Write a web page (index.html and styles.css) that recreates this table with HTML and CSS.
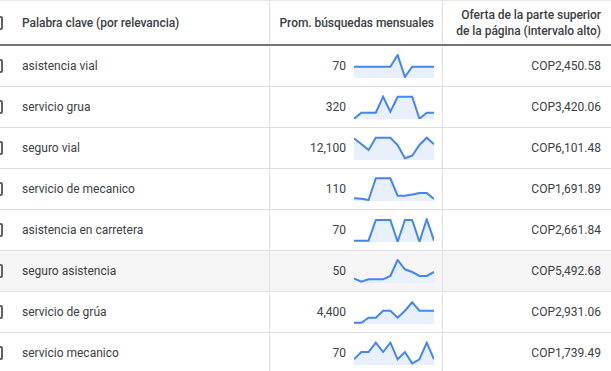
FILE: index.html
```html
<!DOCTYPE html>
<html lang="es">
<head>
<meta charset="utf-8">
<link rel="stylesheet" href="styles.css">
</head>
<body>
<div class="table">
  <div class="row head">
    <div class="cell kw"><span class="cb"></span><span>Palabra clave (por relevancia)</span></div>
    <div class="cell avg">Prom. búsquedas mensuales</div>
    <div class="cell bid">Oferta de la parte superior<br>de la página (intervalo alto)</div>
  </div>
  <div id="rows"></div>
</div>
<script src="app.js"></script>
</body>
</html>
```

FILE: styles.css
```css
html, body { margin: 0; padding: 0; background: #fff; }
body { font-family: Roboto, "Noto Sans", Arial, sans-serif; color: #3c4043; overflow: hidden; }
.table { width: 611px; border-top: 1px solid #e8e8e8; }
.row { display: grid; grid-template-columns: 269px 173px 1fr; height: 40px; border-bottom: 1px solid #e0e0e0; font-size: 12px; }
.row.head { height: 43px; border-bottom: 2px solid #757575; font-size: 12px; font-weight: 500; color: #3c4043; letter-spacing: -0.05px; }
.row.hover { background: #f5f5f5; }
.cell { display: flex; align-items: center; }
.avg, .bid { border-left: 1px solid #e0e0e0; justify-content: flex-end; text-align: right; }
.kw { gap: 19px; }
.cb { width: 14px; height: 14px; box-sizing: border-box; border: 2px solid #5f6368; border-radius: 2px; margin-left: -11px; flex: none; }
.head .avg { padding-right: 8px; }
.head .bid { padding-right: 10px; line-height: 16px; }
.avg { padding-right: 8px; gap: 8px; }
.bid { padding-right: 10px; }
.spark { width: 80px; height: 24px; display: block; flex: none; }
.spark .area { fill: #e8f0fe; }
.spark .line { fill: none; stroke: #4285f4; stroke-width: 2; stroke-linejoin: miter; }
```

FILE: app.js
```js
const data = [
  ["asistencia vial","70","COP2,450.58",[12.7,12.7,12.7,12.7,12.7,12.7,1,23,12.7,12.7,12.7,12.7]],
  ["servicio grua","320","COP3,420.06",[23.7,17.7,17.7,17.7,1.7,16.7,1.7,1.7,1.7,23.7,17.7,17.7]],
  ["seguro vial","12,100","COP6,101.48",[2.3,8,14,1.7,1.7,1.7,9,22.3,19.7,9,1.7,8.3]],
  ["servicio de mecanico","110","COP1,691.89",[21.3,21.7,23,1.3,1.3,1.3,18.7,18.7,17.5,16,16,22]],
  ["asistencia en carretera","70","COP2,661.84",[22.7,22.7,22.7,2,2,2,23.7,2,2,23.7,1.3,22.7]],
  ["seguro asistencia","50","COP5,492.68",[19.3,22.7,20.3,20.3,20.3,17,1,10.3,13,17,17,13]],
  ["servicio de grúa","4,400","COP2,931.06",[22.7,22.7,17.7,17.7,10.7,10.7,17.7,10.7,2.3,10.7,10.7,10.7]],
  ["servicio mecanico","70","COP1,739.49",[18.3,11,11,1.7,11,1.7,18.3,11,22.3,18.3,1.7,18.3]]
];
const ns = "http://www.w3.org/2000/svg";
const rows = document.getElementById("rows");
data.forEach((d, i) => {
  const row = document.createElement("div");
  row.className = "row" + (i === 5 ? " hover" : "");
  const kw = document.createElement("div");
  kw.className = "cell kw";
  kw.innerHTML = '<span class="cb"></span>';
  const t = document.createElement("span"); t.textContent = d[0]; kw.appendChild(t);
  const avg = document.createElement("div");
  avg.className = "cell avg";
  const n = document.createElement("span"); n.textContent = d[1]; avg.appendChild(n);
  const svg = document.createElementNS(ns, "svg");
  svg.setAttribute("class", "spark");
  svg.setAttribute("viewBox", "0 0 80 24");
  const pts = d[3].map((y, k) => [(k * 80 / 11).toFixed(2), y]);
  const line = pts.map(p => p.join(",")).join(" ");
  const area = document.createElementNS(ns, "polygon");
  area.setAttribute("class", "area");
  area.setAttribute("points", line + " 80,24 0,24");
  const pl = document.createElementNS(ns, "polyline");
  pl.setAttribute("class", "line");
  pl.setAttribute("points", line);
  svg.appendChild(area); svg.appendChild(pl);
  avg.appendChild(svg);
  const bid = document.createElement("div");
  bid.className = "cell bid";
  bid.textContent = d[2];
  row.appendChild(kw); row.appendChild(avg); row.appendChild(bid);
  rows.appendChild(row);
});
```
